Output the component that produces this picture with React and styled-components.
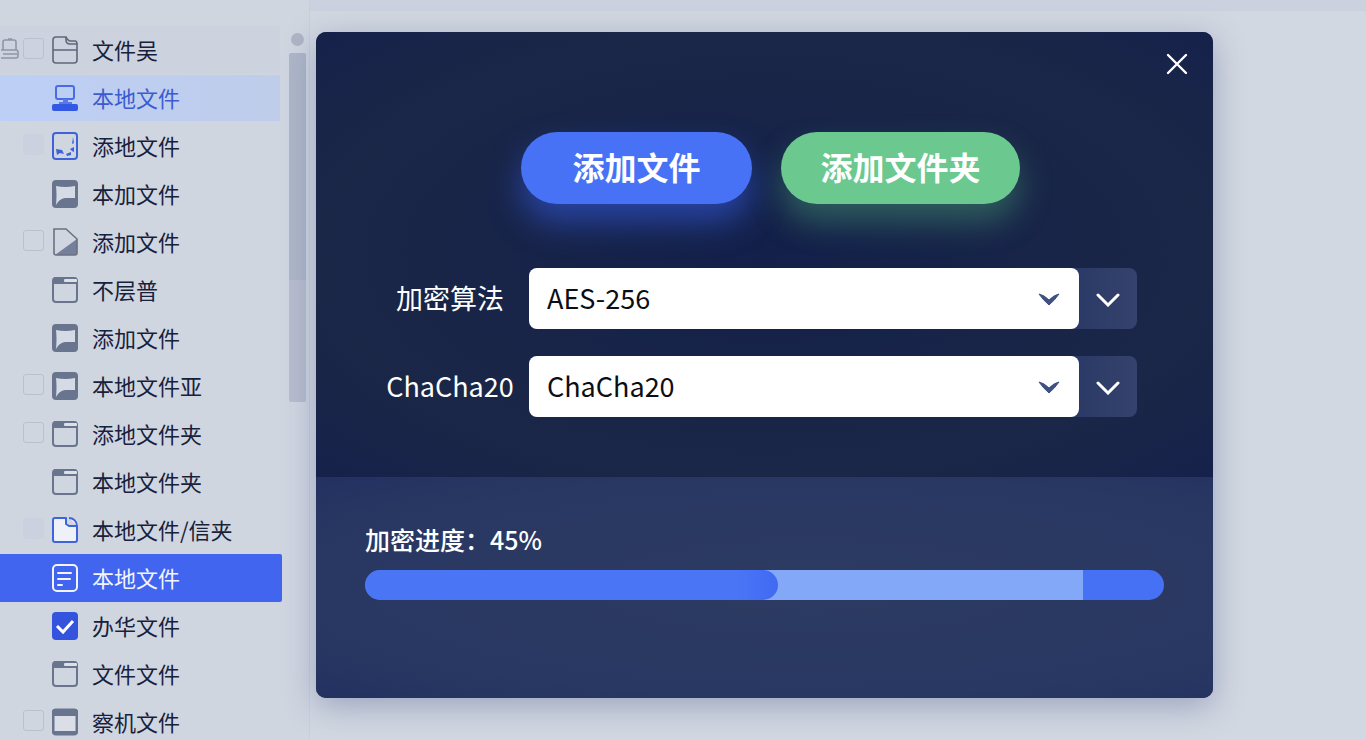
import React, { useState } from "react";
import styled, { createGlobalStyle, css } from "styled-components";

const GlobalStyle = createGlobalStyle`
  * {
    box-sizing: border-box;
  }
  body {
    margin: 0;
    overflow: hidden;
    background: #d2d8e1;
    font-family: "Noto Sans CJK SC", "Noto Sans", sans-serif;
  }
  button, select {
    font-family: inherit;
  }
`;

//.........Layout...............
const Page = styled.div`
  display: flex;
  height: 100vh;
`;
const Sidebar = styled.aside`
  display: flex;
  flex: 0 0 310px;
  overflow: hidden;
  padding-top: 26px;
  background: #d0d6e0;
  border-right: 1px solid #c8cedc;
`;
const Main = styled.main`
  flex: 1;
  min-width: 0;
`;
const TopStrip = styled.div`
  height: 11px;
  background: #cbd1df;
`;
const Stage = styled.div`
  padding: 21px 153px 42px 6px;
`;

//.........Sidebar...............
const FileList = styled.ul`
  flex: 1;
  margin: 0;
  padding: 0;
  list-style: none;
`;
const FileItem = styled.li`
  display: flex;
  align-items: center;
  height: 48px;
  color: #18213c;
  ${({ $state }) =>
    $state === "head" &&
    css`
      margin-right: 2px;
      background: #cdd3de;
    `}
  ${({ $state }) =>
    $state === "current" &&
    css`
      height: 46px;
      margin: 1px 2px 1px 0;
      background: linear-gradient(90deg, #bccff5, #bfcdea);
      color: #3b5bd0;
    `}
  ${({ $state }) =>
    $state === "active" &&
    css`
      border-radius: 0 2px 2px 0;
      background: #4165ee;
      color: #f2f5ff;
    `}
`;
const Gutter = styled.span`
  display: flex;
  justify-content: flex-end;
  align-items: center;
  gap: 4px;
  flex: 0 0 52px;
  padding: 0 8px 4px 0;
`;
const Tick = styled.input`
  appearance: none;
  width: 21px;
  height: 21px;
  margin: 0;
  border: 1px solid ${({ $faint }) => ($faint ? "#cad1df" : "#b9c0d2")};
  border-radius: 3px;
  background: ${({ $faint }) => ($faint ? "#cbd2df" : "transparent")};
`;
const FileLink = styled.a`
  display: flex;
  align-items: center;
  gap: 14px;
  color: inherit;
  font-size: 22px;
  line-height: 32px;
  text-decoration: none;
  white-space: nowrap;
`;
const FileName = styled.span`
  padding-bottom: 3px;
`;
const ScrollColumn = styled.div`
  display: flex;
  flex-direction: column;
  align-items: center;
  flex: 0 0 27px;
  gap: 7px;
  padding: 7px 0 0 3px;
`;
const ScrollDot = styled.span`
  width: 13px;
  height: 13px;
  border-radius: 50%;
  background: #aeb5c5;
`;
const ScrollThumb = styled.span`
  width: 17px;
  height: 349px;
  border-radius: 2px;
  background: linear-gradient(#aeb6c8 65%, #b7bdce 65%);
`;

//.........Dialog...............
const Dialog = styled.section`
  overflow: hidden;
  border-radius: 10px;
  background: #1a2546;
  box-shadow: 0 8px 32px rgba(70, 85, 140, 0.4);
  color: #fff;
`;
const Settings = styled.div`
  padding: 16px 20px 60px;
  background: radial-gradient(ellipse at center, #13204a, #1b2747 70%, #15214a);
`;
const DialogHead = styled.div`
  display: flex;
  justify-content: flex-end;
`;
const CloseButton = styled.button`
  display: flex;
  justify-content: center;
  align-items: center;
  width: 32px;
  height: 32px;
  padding: 0;
  border: 0;
  background: none;
  color: #fff;
`;
const Actions = styled.div`
  display: flex;
  justify-content: center;
  gap: 29px;
  padding: 52px 0 64px 12px;
`;
const PillButton = styled.button`
  min-width: ${({ $wide }) => ($wide ? "239px" : "231px")};
  height: 72px;
  padding: 0 32px 4px;
  border: 0;
  border-radius: 36px;
  background: ${({ $green }) => ($green ? "#6bc88f" : "#4872f5")};
  box-shadow: 0 18px 32px
    ${({ $green }) =>
      $green ? "rgba(75, 165, 120, 0.45)" : "rgba(55, 95, 235, 0.55)"};
  color: #fff;
  font-size: 32px;
  font-weight: 700;
  line-height: 48px;
`;
const Fields = styled.div`
  display: grid;
  gap: 27px;
  padding: 0 56px 0 50px;
`;
const Field = styled.div`
  display: grid;
  grid-template-columns: 128px 1fr;
  align-items: center;
  gap: 15px;
`;
const FieldLabel = styled.label`
  padding-bottom: 2px;
  font-size: 27px;
  line-height: 40px;
  text-align: center;
  white-space: nowrap;
`;
const Combo = styled.div`
  display: flex;
  border-radius: 8px;
  background: linear-gradient(90deg, #2b3966 90%, #34426c);
`;
const SelectBox = styled.div`
  display: grid;
  flex: 1;
  align-items: center;
  border-radius: 8px;
  background: #fff;
  color: #3f5182;
  > * {
    grid-area: 1 / 1;
  }
  > svg {
    justify-self: end;
    margin-right: 18px;
    pointer-events: none;
  }
`;
const Select = styled.select`
  appearance: none;
  width: 100%;
  height: 61px;
  padding: 0 56px 2px 18px;
  border: 0;
  border-radius: 8px;
  background: transparent;
  color: #0c0e14;
  font-size: 27px;
`;
const MoreButton = styled.button`
  display: flex;
  justify-content: center;
  align-items: center;
  width: 58px;
  padding: 0;
  border: 0;
  background: none;
  color: #fff;
`;
const Progress = styled.div`
  padding: 42px 49px 98px;
  background: radial-gradient(ellipse at 55% 50%, #2d3b63, #293862 70%, #233161);
`;
const ProgressLabel = styled.div`
  margin-bottom: 11px;
  font-size: 25px;
  font-weight: 500;
  line-height: 40px;
`;
const Track = styled.div`
  display: grid;
  overflow: hidden;
  height: 30px;
  border-radius: 15px;
  background: #4771f4;
`;
const Bar = styled.div`
  grid-area: 1 / 1;
  border-radius: ${({ $buffer }) => ($buffer ? "0" : "15px")};
  background: ${({ $buffer }) =>
    $buffer ? "#82a8f7" : "linear-gradient(90deg, #4a76f5 90%, #4169f3)"};
`;

//.........Icons...............
const GREY = "#69758f";

const Icon = ({ size = 26, children }) => (
  <svg width={size} height={size + 2} viewBox="0 0 26 28" fill="none" aria-hidden="true">
    {children}
  </svg>
);

const icons = {
  folder: (
    <g stroke="#5f6779" strokeWidth="1.6" strokeLinejoin="round">
      <path d="M4 1h10v3q0 4 4 4h7v16a3 3 0 0 1-3 3H4a3 3 0 0 1-3-3V4a3 3 0 0 1 3-3z" />
      <path d="M14 1q2 4 4 4h5q2 0 2 3M1 14h24" />
    </g>
  ),
  computer: (
    <>
      <rect x="4" y="2" width="18" height="13" rx="2" stroke="#4a6be6" strokeWidth="2" />
      <path d="M11 15h5v3h4v2H7v-2h4z" fill="#5b7aea" />
      <rect x="0" y="20" width="26" height="7" rx="2" fill="#3358e4" />
    </>
  ),
  picture: (
    <>
      <rect x="1" y="1" width="24" height="26" rx="3" stroke="#3f62d8" strokeWidth="2" />
      <path
        d="M4 17l6 1 2 4-4-1-3 2zM14 22l5-2v3l-4 1zM18 17l4-2v5l-2-1zM21 5l1 6-2 1z"
        fill="#3f62d8"
      />
    </>
  ),
  bubble: (
    <>
      <rect width="26" height="28" rx="4" fill={GREY} />
      <path d="M4 6q9 2 19 0v12H13q-6 1-9 7 1-11 0-19z" fill="#d5dbe5" />
    </>
  ),
  page: (
    <>
      <path d="M3 27L25 11v14a2 2 0 0 1-2 2z" fill="#74809b" />
      <path d="M2 1h12l11 10v14a2 2 0 0 1-2 2H4a2 2 0 0 1-2-2z" stroke="#6c7182" strokeWidth="1.6" />
    </>
  ),
  window: (
    <>
      <rect x="1" y="2" width="24" height="24" rx="3" stroke={GREY} strokeWidth="2" />
      <path d="M1 4a3 3 0 0 1 3-3h18a3 3 0 0 1 3 3v4H1z" fill={GREY} />
      <rect x="12" y="3" width="13" height="3" rx="1" fill="#dbe0e9" />
    </>
  ),
  newFile: (
    <path
      d="M3 2h11v6l3 2h8v14a2 2 0 0 1-2 2H3a2 2 0 0 1-2-2V4a2 2 0 0 1 2-2zM17 2c4 0 8 3 8 8"
      fill="#eef1f8"
      stroke="#3f63dc"
      strokeWidth="2"
      strokeLinejoin="round"
    />
  ),
  document: (
    <g stroke="#f2f5ff" strokeWidth="2" strokeLinecap="round">
      <rect x="1" y="1" width="24" height="26" rx="4" />
      <path d="M6 9h13M6 15h12M6 21h4" />
    </g>
  ),
  checked: (
    <>
      <rect width="26" height="28" rx="4" fill="#3454de" />
      <path d="M5 14l6 6L21 9" stroke="#fff" strokeWidth="3" />
    </>
  ),
  panel: (
    <>
      <rect x="1" y="2" width="24" height="24" rx="3" fill="#d9dee7" stroke={GREY} strokeWidth="3" />
      <path d="M0 4a3 3 0 0 1 3-3h20a3 3 0 0 1 3 3v4H0zM1 23h24v1a3 3 0 0 1-3 3H4a3 3 0 0 1-3-3z" fill={GREY} />
    </>
  ),
};

const DriveIcon = () => (
  <svg width="18" height="22" viewBox="0 0 18 22" fill="none" stroke="#8e95a5" strokeWidth="1.6" aria-hidden="true">
    <path d="M2 13V5q0-2 2-2h9q2 0 2 2v8M7 2h4M0 13h15q2 0 2 2v4q0 2-2 2H0M2 17h14" />
  </svg>
);

const Chevron = ({ filled }) => (
  <svg width="24" height="16" viewBox="0 0 24 16" fill="none" aria-hidden="true">
    {filled ? (
      <path d="M2 3q5 1 10 6 5-5 10-6-4 6-10 11Q6 9 2 3z" fill="currentColor" stroke="currentColor" strokeLinejoin="round" />
    ) : (
      <path d="M2 4l10 10L22 4" stroke="currentColor" strokeWidth="3" strokeLinecap="round" />
    )}
  </svg>
);

const files = [
  { name: "文件吴", icon: "folder", state: "head", tick: "normal", drive: true },
  { name: "本地文件", icon: "computer", state: "current" },
  { name: "添地文件", icon: "picture", tick: "faint" },
  { name: "本加文件", icon: "bubble" },
  { name: "添加文件", icon: "page", tick: "normal" },
  { name: "不层普", icon: "window" },
  { name: "添加文件", icon: "bubble" },
  { name: "本地文件亚", icon: "bubble", tick: "normal" },
  { name: "添地文件夹", icon: "window", tick: "normal" },
  { name: "本地文件夹", icon: "window" },
  { name: "本地文件/信夹", icon: "newFile", tick: "faint" },
  { name: "本地文件", icon: "document", state: "active" },
  { name: "办华文件", icon: "checked" },
  { name: "文件文件", icon: "window" },
  { name: "察机文件", icon: "panel", tick: "normal" },
];

const algorithms = ["AES-256", "ChaCha20"];

const AlgorithmField = ({ id, label, initial }) => {
  const [value, setValue] = useState(initial);
  return (
    <Field>
      <FieldLabel htmlFor={id}>{label}</FieldLabel>
      <Combo>
        <SelectBox>
          <Select id={id} value={value} onChange={(e) => setValue(e.target.value)}>
            {algorithms.map((name) => (
              <option key={name}>{name}</option>
            ))}
          </Select>
          <Chevron filled />
        </SelectBox>
        <MoreButton type="button" aria-label={label}>
          <Chevron />
        </MoreButton>
      </Combo>
    </Field>
  );
};

const App = () => {
  const [open, setOpen] = useState(true);
  const done = 51.7;
  const buffered = 89.9;

  return (
    <>
      <GlobalStyle />
      <Page>
        <Sidebar>
          <FileList>
            {files.map((file, index) => (
              <FileItem key={index} $state={file.state}>
                <Gutter>
                  {file.drive && <DriveIcon />}
                  {file.tick && (
                    <Tick type="checkbox" aria-label={file.name} $faint={file.tick === "faint"} />
                  )}
                </Gutter>
                <FileLink href="#">
                  <Icon>{icons[file.icon]}</Icon>
                  <FileName>{file.name}</FileName>
                </FileLink>
              </FileItem>
            ))}
          </FileList>
          <ScrollColumn>
            <ScrollDot />
            <ScrollThumb />
          </ScrollColumn>
        </Sidebar>

        <Main>
          <TopStrip />
          <Stage>
            {open && (
              <Dialog role="dialog">
                <Settings>
                  <DialogHead>
                    <CloseButton type="button" aria-label="关闭" onClick={() => setOpen(false)}>
                      <svg width="22" height="22" viewBox="0 0 22 22" stroke="currentColor" strokeWidth="2.4" strokeLinecap="round">
                        <path d="M2 2l18 18M20 2L2 20" />
                      </svg>
                    </CloseButton>
                  </DialogHead>
                  <Actions>
                    <PillButton type="button">添加文件</PillButton>
                    <PillButton type="button" $green $wide>
                      添加文件夹
                    </PillButton>
                  </Actions>
                  <Fields>
                    <AlgorithmField id="algorithm" label="加密算法" initial="AES-256" />
                    <AlgorithmField id="cipher" label="ChaCha20" initial="ChaCha20" />
                  </Fields>
                </Settings>
                <Progress>
                  <ProgressLabel>加密进度：45%</ProgressLabel>
                  <Track>
                    <Bar
                      $buffer
                      style={{ marginLeft: `${done / 2}%`, width: `${buffered - done / 2}%` }}
                    />
                    <Bar style={{ width: `${done}%` }} />
                  </Track>
                </Progress>
              </Dialog>
            )}
          </Stage>
        </Main>
      </Page>
    </>
  );
};

export default App;
